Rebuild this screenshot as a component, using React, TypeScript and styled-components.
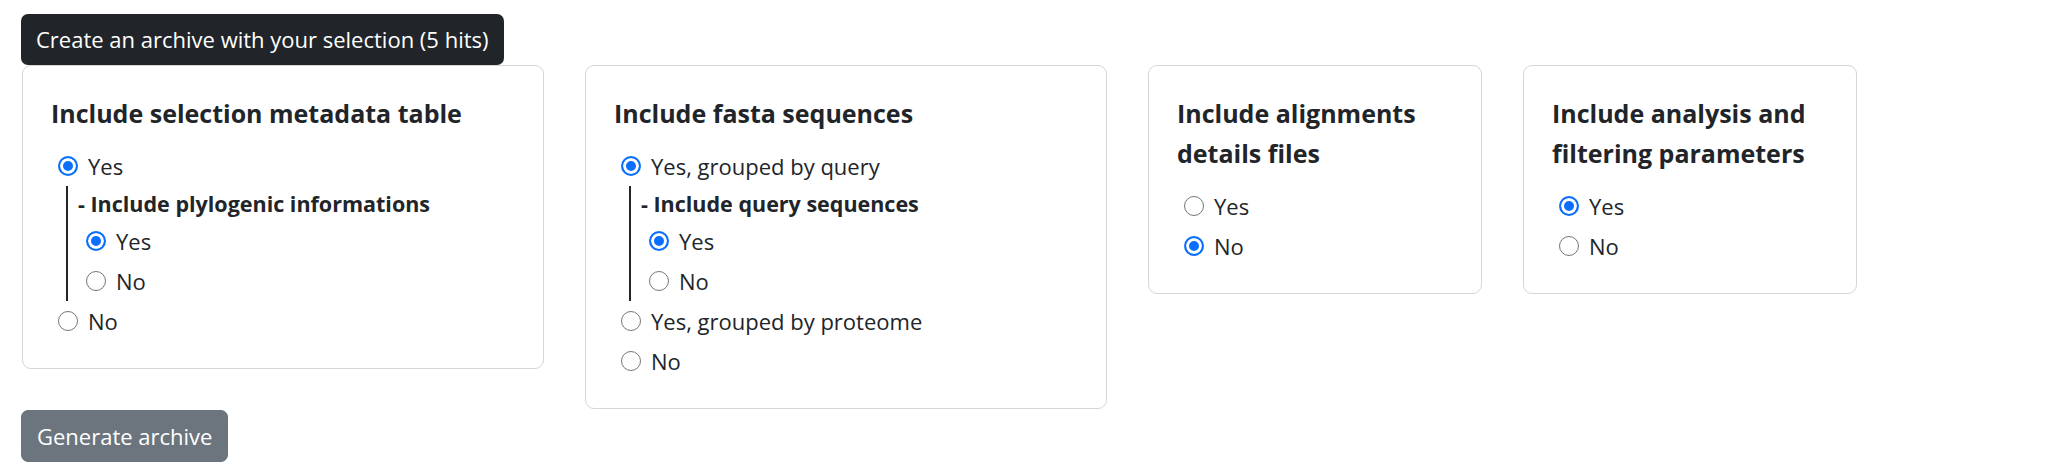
import React from 'react';
import styled, { createGlobalStyle } from 'styled-components';

const GlobalStyle = createGlobalStyle`
	body {
		margin: 0;
		background: #fff;
		color: #212529;
		font-family: "Open Sans", "Noto Sans", sans-serif;
		font-size: 22px;
	}
`;

const Page = styled.div`
	padding: 14px 0 0 21px;
`;

const Banner = styled.div`
	display: inline-block;
	padding: 10px 15px;
	line-height: 31px;
	color: #fff;
	background-color: #212529;
	border-radius: 7px;
`;

const CardRow = styled.div`
	display: flex;
	align-items: flex-start;
	gap: 41px;
	padding-left: 1px;
`;

const Card = styled.div<{ $width: number }>`
	box-sizing: border-box;
	width: ${(props) => props.$width}px;
	padding: 27px 27px 27px 28px;
	border: 1px solid #d6d6d6;
	border-radius: 9px;
	background: #fff;
`;

const CardTitle = styled.div`
	margin-bottom: 13px;
	font-size: 25px;
	font-weight: 700;
	line-height: 40px;
`;

const Option = styled.label<{ $nested?: boolean }>`
	display: flex;
	align-items: center;
	gap: 10px;
	height: 40px;
	padding-left: ${(props) => (props.$nested ? 8 : 7)}px;
`;

const Radio = styled.input`
	appearance: none;
	box-sizing: border-box;
	flex: none;
	width: 20px;
	height: 20px;
	margin: 0;
	border: 1.5px solid #767676;
	border-radius: 50%;
	background: #fff;

	&:checked {
		border: 2px solid #0a6ffd;
		background: #0a6ffd;
		box-shadow: inset 0 0 0 3px #fff;
	}
`;

const Nested = styled.div`
	margin-left: 15px;
	padding-left: 10px;
	border-left: 2px solid #212529;
`;

const SubTitle = styled.div`
	font-size: 21.5px;
	font-weight: 700;
	line-height: 35px;
`;

const Button = styled.button`
	display: block;
	margin-top: 1px;
	padding: 10px 15px;
	font-family: inherit;
	font-size: 22px;
	line-height: 30px;
	color: #fff;
	background-color: #6c757d;
	border: 1px solid #6c757d;
	border-radius: 7px;
`;

interface RadioOptionProps {
	name: string;
	label: string;
	checked?: boolean;
	nested?: boolean;
}

const RadioOption: React.FC<RadioOptionProps> = ({ name, label, checked, nested }) => (
	<Option $nested={nested}>
		<Radio type="radio" name={name} defaultChecked={checked} />
		{label}
	</Option>
);

const App: React.FC = () => {
	return (
		<Page>
			<GlobalStyle />
			<Banner>Create an archive with your selection (5 hits)</Banner>
			<CardRow>
				<Card $width={522}>
					<CardTitle>Include selection metadata table</CardTitle>
					<RadioOption name="metadata" label="Yes" checked />
					<Nested>
						<SubTitle>- Include plylogenic informations</SubTitle>
						<RadioOption name="phylo" label="Yes" checked nested />
						<RadioOption name="phylo" label="No" nested />
					</Nested>
					<RadioOption name="metadata" label="No" />
				</Card>
				<Card $width={522}>
					<CardTitle>Include fasta sequences</CardTitle>
					<RadioOption name="fasta" label="Yes, grouped by query" checked />
					<Nested>
						<SubTitle>- Include query sequences</SubTitle>
						<RadioOption name="query" label="Yes" checked nested />
						<RadioOption name="query" label="No" nested />
					</Nested>
					<RadioOption name="fasta" label="Yes, grouped by proteome" />
					<RadioOption name="fasta" label="No" />
				</Card>
				<Card $width={334}>
					<CardTitle>Include alignments details files</CardTitle>
					<RadioOption name="alignments" label="Yes" />
					<RadioOption name="alignments" label="No" checked />
				</Card>
				<Card $width={334}>
					<CardTitle>Include analysis and filtering parameters</CardTitle>
					<RadioOption name="params" label="Yes" checked />
					<RadioOption name="params" label="No" />
				</Card>
			</CardRow>
			<Button type="button">Generate archive</Button>
		</Page>
	);
};

export default App;
